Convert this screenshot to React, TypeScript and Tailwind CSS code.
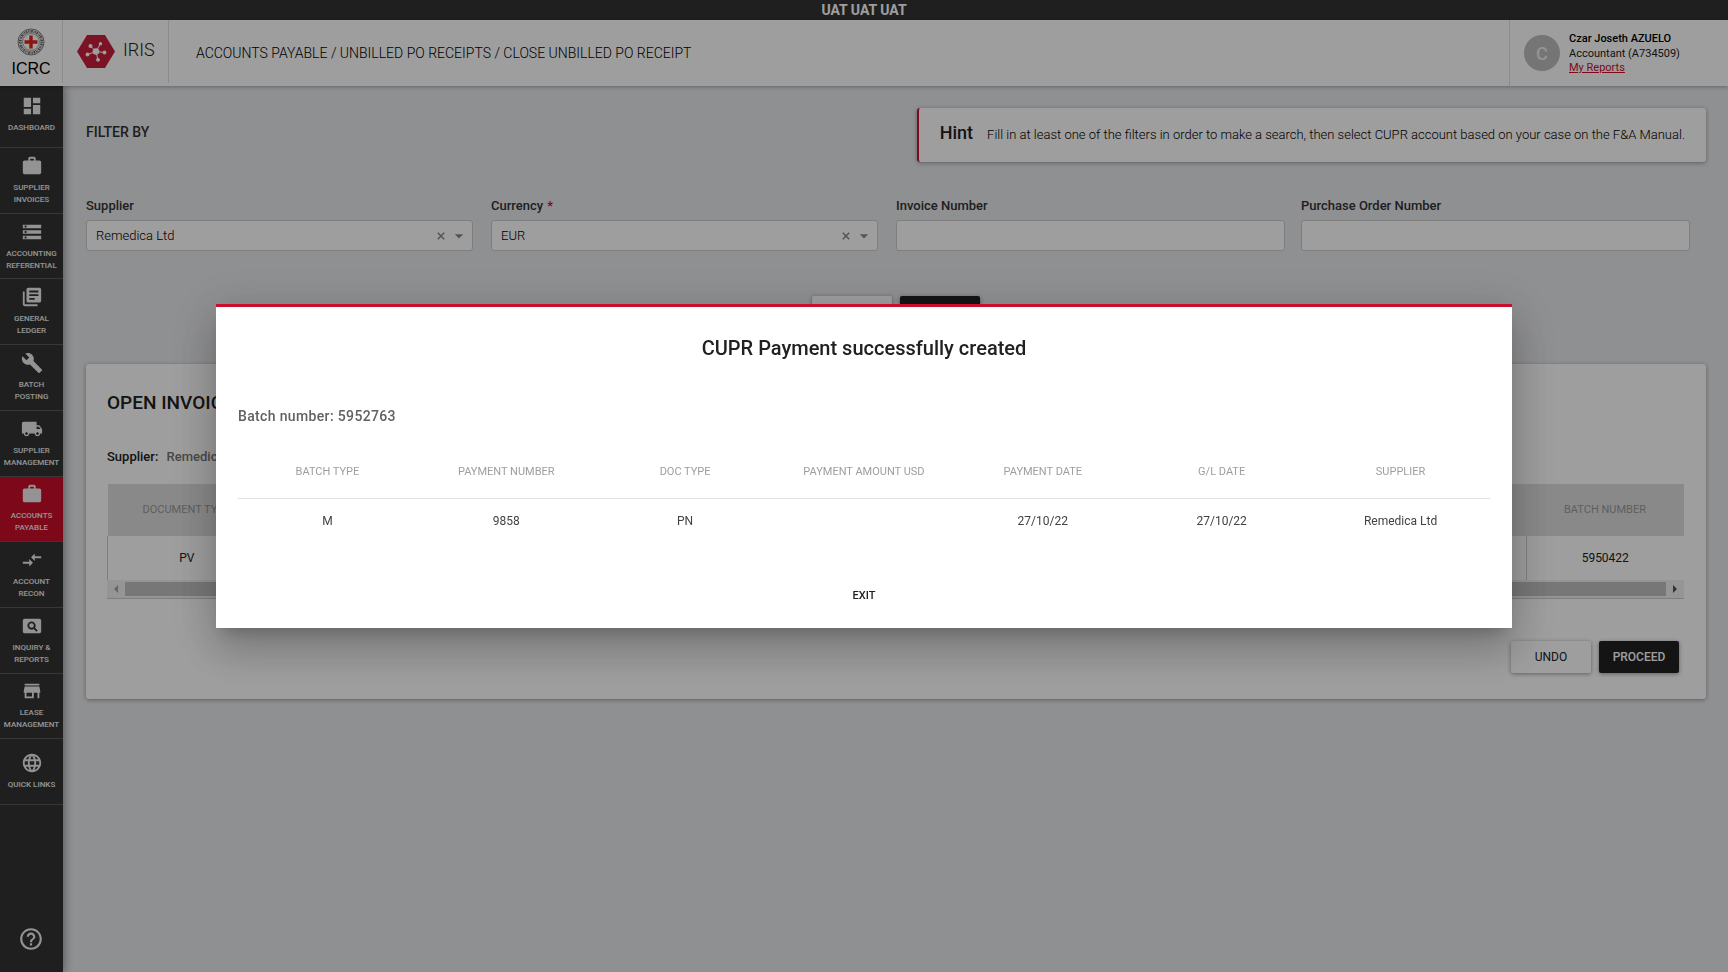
import React from "react";
import {
  MdDashboard,
  MdWork,
  MdStorage,
  MdLibraryBooks,
  MdBuild,
  MdLocalShipping,
  MdCompareArrows,
  MdPageview,
  MdStore,
  MdLanguage,
  MdHelpOutline,
  MdArrowDropDown,
} from "react-icons/md";
import type { IconType } from "react-icons";

const FONT = "font-['Roboto','Liberation_Sans',sans-serif]";

type NavItem = { icon: IconType; lines: string[]; active?: boolean };

const NAV: NavItem[] = [
  { icon: MdDashboard, lines: ["DASHBOARD"] },
  { icon: MdWork, lines: ["SUPPLIER", "INVOICES"] },
  { icon: MdStorage, lines: ["ACCOUNTING", "REFERENTIAL"] },
  { icon: MdLibraryBooks, lines: ["GENERAL", "LEDGER"] },
  { icon: MdBuild, lines: ["BATCH", "POSTING"] },
  { icon: MdLocalShipping, lines: ["SUPPLIER", "MANAGEMENT"] },
  { icon: MdWork, lines: ["ACCOUNTS", "PAYABLE"], active: true },
  { icon: MdCompareArrows, lines: ["ACCOUNT", "RECON"] },
  { icon: MdPageview, lines: ["INQUIRY &", "REPORTS"] },
  { icon: MdStore, lines: ["LEASE", "MANAGEMENT"] },
  { icon: MdLanguage, lines: ["QUICK LINKS"] },
];

function IcrcLogo() {
  return (
    <div className="flex w-[63px] shrink-0 flex-col items-center self-stretch border-r border-[#e0e0e0] pt-2">
      <svg width="28" height="28" viewBox="0 0 28 28" aria-hidden="true">
        <circle cx="14" cy="14" r="13" fill="#fff" stroke="#444" strokeWidth="0.7" />
        <circle
          cx="14"
          cy="14"
          r="10.7"
          fill="none"
          stroke="#666"
          strokeWidth="2.8"
          strokeDasharray="1 0.7 1.6 0.8 0.7 0.6"
        />
        <circle cx="14" cy="14" r="8.4" fill="#fff" stroke="#666" strokeWidth="0.6" />
        <path d="M12.300 7.500h3.400v4.800h4.800v3.400h-4.800v4.800h-3.400v-4.800H7.500v-3.400h4.800z" fill="#e3231b" />
      </svg>
      <span className="font-['Liberation_Sans',sans-serif] text-[16px] leading-[26px] text-black">ICRC</span>
    </div>
  );
}

function IrisMark() {
  return (
    <svg width="38" height="33" viewBox="0 0 38 33" aria-hidden="true">
      <path d="M10 0h18l10 16.500-10 16.500H10L0 16.500z" fill="#c8203a" />
      <g stroke="#fff" strokeWidth="1">
        <path d="M19 16.500 13.500 11M19 16.500 23.500 8.500M19 16.500 27.500 17.500M19 16.500 21 25M19 16.500 10.500 19.500" />
      </g>
      <g fill="#fff">
        <circle cx="19" cy="16.500" r="3.300" />
        <circle cx="13.500" cy="11" r="2" />
        <circle cx="23.500" cy="8.700" r="1.700" />
        <circle cx="27.500" cy="17.500" r="1.900" />
        <circle cx="21" cy="24.800" r="1.900" />
        <circle cx="10.500" cy="19.500" r="1.900" />
      </g>
    </svg>
  );
}

function Header() {
  return (
    <header className="relative z-20 flex h-[66px] shrink-0 bg-white shadow-[0_1px_4px_rgba(0,0,0,0.3)]">
      <div className="flex h-[63px]">
        <IcrcLogo />
        <div className="flex w-[106px] items-center gap-2 border-r border-[#e0e0e0] pl-[14px]">
          <IrisMark />
          <span className="pb-1 text-[18px] font-light leading-6 text-[#212121]">IRIS</span>
        </div>
      </div>
      <h1 className="flex flex-1 items-center pl-[27px] text-sm font-light text-black">
        ACCOUNTS PAYABLE / UNBILLED PO RECEIPTS / CLOSE UNBILLED PO RECEIPT
      </h1>
      <div className="flex w-[219px] items-center gap-[9px] border-l border-[#e0e0e0] pl-[14px]">
        <div className="flex size-9 items-center justify-center rounded-full bg-[#bdbdbd] text-[18px] font-medium text-[#eeeeee]">
          C
        </div>
        <div className="text-[11px] leading-[15px] text-[#212121]">
          <p className="font-medium text-black">Czar Joseth AZUELO</p>
          <p>Accountant (A734509)</p>
          <a href="#reports" className="block leading-[14px] text-[#c8102e] underline">
            My Reports
          </a>
        </div>
      </div>
    </header>
  );
}

function Sidebar() {
  return (
    <aside className="relative z-10 flex w-[63px] shrink-0 flex-col justify-between bg-[#333] shadow-[2px_0_8px_rgba(0,0,0,0.35)]">
      <nav className="flex h-[719px] flex-col">
        {NAV.map(({ icon: Icon, lines, active }, i) => (
          <a
            key={i}
            href="#section"
            className={
              "flex flex-col items-center justify-center gap-[5px] border-b border-[#5a5a5a] text-center text-[8px] font-medium leading-[12px] text-[#eeeeee] " +
              (i === 0 ? "h-[62px] shrink-0 pb-1 " : "flex-1 ") +
              (active ? "bg-[#c90d2b]" : "")
            }
          >
            <Icon size={22} />
            <span>
              {lines.map((l) => (
                <span key={l} className="block whitespace-nowrap">
                  {l}
                </span>
              ))}
            </span>
          </a>
        ))}
      </nav>
      <button type="button" aria-label="Help" className="flex justify-center pb-5 pr-[2px] text-[#eeeeee]">
        <MdHelpOutline size={26} />
      </button>
    </aside>
  );
}

function SelectField({ id, label, value, required }: { id: string; label: string; value: string; required?: boolean }) {
  return (
    <div className="pr-[18px]">
      <label htmlFor={id} className="block text-[13px] font-medium leading-4 text-[#333]">
        {label}
        {required && <span className="ml-1 text-[#c8102e]">*</span>}
      </label>
      <div className="mt-[6px] flex h-[31px] items-center rounded-[3px] border border-[#ccc] bg-white pr-[3px]">
        <select id={id} className="h-full flex-1 appearance-none bg-transparent px-[9px] text-[13px] font-light text-black outline-none">
          <option>{value}</option>
        </select>
        <button type="button" aria-label={"Clear " + label} className="text-[#888]">
          <svg width="8" height="8" viewBox="0 0 8 8" stroke="currentColor" strokeWidth="1.500">
            <path d="M.8.8l6.400 6.400M7.200.8.800 7.200" />
          </svg>
        </button>
        <MdArrowDropDown size={20} className="ml-1 text-[#888]" />
      </div>
    </div>
  );
}

function TextField({ id, label }: { id: string; label: string }) {
  return (
    <div className="pr-4">
      <label htmlFor={id} className="block text-[13px] font-medium leading-4 text-[#333]">
        {label}
      </label>
      <input id={id} type="text" className="mt-[6px] block h-[31px] w-full rounded-[3px] border border-[#ccc] bg-white px-2 text-[13px] outline-none" />
    </div>
  );
}

function ActionButton({ children, dark }: { children: React.ReactNode; dark?: boolean }) {
  return (
    <button
      type="button"
      className={
        "h-8 w-20 rounded-[2px] text-xs shadow-[0_1px_4px_rgba(0,0,0,0.4)] " +
        (dark ? "bg-[#212121] font-medium text-white" : "bg-white text-[#212121]")
      }
    >
      {children}
    </button>
  );
}

function InvoiceCard() {
  return (
    <section className="mt-9 rounded-[3px] bg-white px-[22px] pb-[26px] pl-[21px] pt-[26px] shadow-[0_1px_4px_rgba(0,0,0,0.35)]">
      <h2 className="text-[19px] font-medium leading-[26px] text-[#212121]">OPEN INVOICES</h2>
      <p className="mt-[33px] text-[13px] font-medium leading-4 text-[#212121]">
        Supplier: <span className="ml-[5px] text-[#757575]">Remedica Ltd</span>
      </p>
      <div className="mt-[19px] border-b border-[#ccc]">
        <table className="w-full table-fixed border-collapse text-center text-xs text-[#212121]">
          <thead className="bg-[#dedede] text-[11px] text-[#999]">
            <tr className="h-[52px]">
              <th className="w-[158px] font-normal">DOCUMENT TYPE</th>
              <th className="font-normal">AMOUNT</th>
              <th className="w-[158px] font-normal">BATCH NUMBER</th>
            </tr>
          </thead>
          <tbody>
            <tr className="h-11">
              <td className="border-l border-[#ccc]">PV</td>
              <td></td>
              <td className="border-l border-[#ccc]">5950422</td>
            </tr>
          </tbody>
        </table>
        <div className="flex h-[18px] items-center justify-between bg-[#f1f1f1] px-[7px]">
          <svg width="4" height="8" viewBox="0 0 4 8" className="text-[#a3a3a3]">
            <path d="M4 0v8L0 4z" fill="currentColor" />
          </svg>
          <div className="mx-[7px] h-[14px] flex-1 bg-[#c1c1c1]" />
          <svg width="4" height="8" viewBox="0 0 4 8" className="text-[#505050]">
            <path d="M0 0v8l4-4z" fill="currentColor" />
          </svg>
        </div>
      </div>
      <div className="mt-[42px] flex justify-end gap-2 pr-[5px]">
        <ActionButton>UNDO</ActionButton>
        <ActionButton dark>PROCEED</ActionButton>
      </div>
    </section>
  );
}

const COLUMNS = ["BATCH TYPE", "PAYMENT NUMBER", "DOC TYPE", "PAYMENT AMOUNT USD", "PAYMENT DATE", "G/L DATE", "SUPPLIER"];
const ROW = ["M", "9858", "PN", "", "27/10/22", "27/10/22", "Remedica Ltd"];

function PaymentDialog() {
  return (
    <div className="fixed inset-0 z-50 flex items-start justify-center bg-black/38 pt-[304px]">
      <div
        role="dialog"
        aria-modal="true"
        aria-labelledby="dialog-title"
        className="w-3/4 border-t-[3px] border-[#c8102e] bg-white px-[22px] pb-4 pt-7 text-center shadow-[0_11px_15px_-7px_rgba(0,0,0,0.2),0_24px_38px_3px_rgba(0,0,0,0.14),0_9px_46px_8px_rgba(0,0,0,0.12)]"
      >
        <h2 id="dialog-title" className="text-[20px] font-medium leading-[26px] text-[#212121]">
          CUPR Payment successfully created
        </h2>
        <p className="mt-[45px] text-left text-sm font-medium leading-5 tracking-wide text-[#616161]">
          Batch number: 5952763
        </p>
        <table className="mt-[18px] w-full table-fixed border-collapse">
          <thead className="border-b border-[#e0e0e0] text-[11px] text-[#9e9e9e]">
            <tr className="h-[54px]">
              {COLUMNS.map((c) => (
                <th key={c} className="pt-[2px] font-normal">
                  {c}
                </th>
              ))}
            </tr>
          </thead>
          <tbody className="text-xs text-[#424242]">
            <tr className="h-[46px]">
              {ROW.map((c, i) => (
                <td key={i}>{c}</td>
              ))}
            </tr>
          </tbody>
        </table>
        <button type="button" className="mt-9 h-8 w-20 text-[11px] font-medium text-[#212121]">
          EXIT
        </button>
      </div>
    </div>
  );
}

export default function App() {
  return (
    <div className={"flex min-h-screen flex-col bg-[#e7e8eb] " + FONT}>
      <div className="flex h-5 shrink-0 items-center justify-center bg-[#333] text-sm font-bold text-white">
        UAT UAT UAT
      </div>
      <Header />
      <div className="flex flex-1">
        <Sidebar />
        <main className="flex-1 px-[22px] pl-[23px] pt-[22px]">
          <div className="flex items-start justify-between">
            <h2 className="pt-[14px] text-sm font-medium leading-5 text-[#333]">FILTER BY</h2>
            <div className="flex h-[54px] items-baseline gap-[14px] rounded-[3px] border-l-2 border-[#c8102e] bg-white pl-[21px] pr-[21px] pt-3 shadow-[0_1px_4px_rgba(0,0,0,0.35)]">
              <span className="text-[18px] font-medium leading-[26px] text-[#212121]">Hint</span>
              <span className="text-[13px] font-light text-black">
                Fill in at least one of the filters in order to make a search, then select CUPR account based on your case on the F&amp;A Manual.
              </span>
            </div>
          </div>
          <form className="mt-9">
            <div className="grid grid-cols-4">
              <SelectField id="supplier" label="Supplier" value="Remedica Ltd" />
              <SelectField id="currency" label="Currency" value="EUR" required />
              <TextField id="invoice-number" label="Invoice Number" />
              <TextField id="po-number" label="Purchase Order Number" />
            </div>
            <div className="mt-[45px] flex justify-center gap-2">
              <ActionButton>CLEAR</ActionButton>
              <ActionButton dark>SEARCH</ActionButton>
            </div>
          </form>
          <InvoiceCard />
        </main>
      </div>
      <PaymentDialog />
    </div>
  );
}
